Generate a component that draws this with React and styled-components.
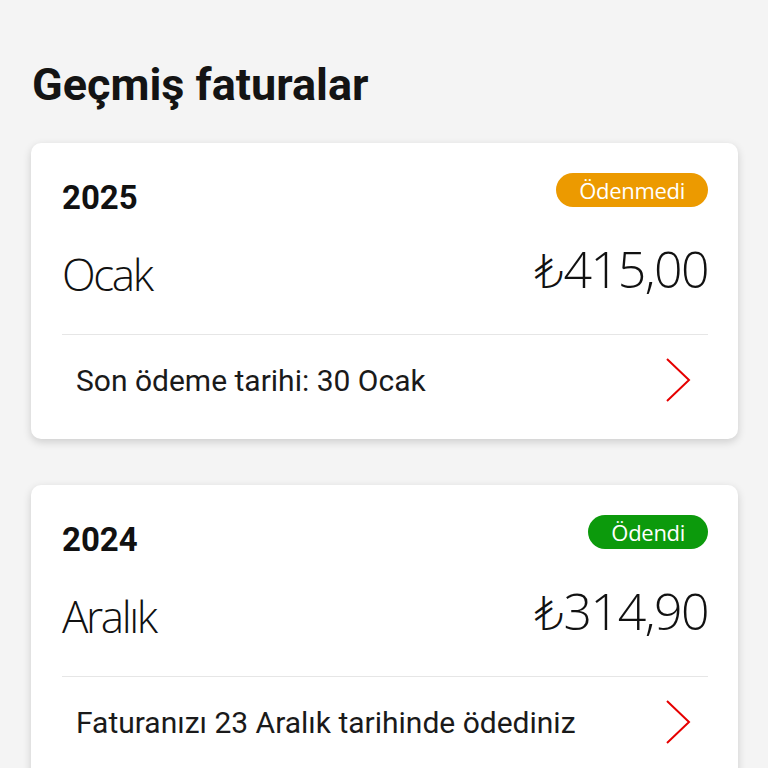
import React from "react"
import styled, { createGlobalStyle } from "styled-components"

const GlobalStyle = createGlobalStyle`
  html, body {
    margin: 0;
    padding: 0;
    background: #f4f4f4;
  }
  body {
    font-family: Roboto, "Liberation Sans", sans-serif;
    color: #111;
  }
`

const Page = styled.div`
  padding: 55px 30px 40px 31px;
  display: flex;
  flex-direction: column;
`

const Title = styled.h1`
  margin: 0 0 28px 1px;
  font-family: Roboto, sans-serif;
  font-weight: 700;
  font-size: 45px;
  line-height: 60px;
  color: #141414;
`

const CardList = styled.div`
  display: flex;
  flex-direction: column;
  gap: 46px;
`

const Card = styled.div`
  background: #fff;
  border-radius: 10px;
  box-shadow: 0 3px 8px rgba(0, 0, 0, 0.16);
  padding: 30px 30px 0 31px;
`

const HeaderRow = styled.div`
  display: flex;
  justify-content: space-between;
  align-items: flex-start;
  height: 40px;
`

const Year = styled.span`
  font-family: Roboto, sans-serif;
  font-weight: 700;
  font-size: 33px;
  line-height: 48px;
  margin-top: 1px;
`

const Badge = styled.span`
  display: inline-flex;
  align-items: center;
  justify-content: center;
  height: 34px;
  padding: 0 23px;
  border-radius: 17px;
  background: ${p => p.$color};
  color: #fff;
  font-family: "Open Sans", sans-serif;
  font-weight: 400;
  font-size: 22px;
  letter-spacing: -0.3px;
`

const AmountRow = styled.div`
  display: flex;
  justify-content: space-between;
  align-items: flex-end;
  height: 122px;
  padding-bottom: 44px;
  box-sizing: border-box;
  border-bottom: 1px solid #e6e6e6;
`

const Month = styled.span`
  font-family: "Open Sans", sans-serif;
  font-weight: 300;
  font-size: 44px;
  line-height: 44px;
  letter-spacing: -2.4px;
  margin-bottom: -6px;
`

const Amount = styled.span`
  font-family: "Open Sans", sans-serif;
  font-weight: 300;
  font-size: 50px;
  line-height: 50px;
  letter-spacing: -1.5px;
  margin-bottom: -4px;
`

// lira sign comes from a fallback face, keep it as thin as the digits
const Currency = styled.span`
  font-family: "DejaVu Sans", "Noto Sans", sans-serif;
  font-weight: 200;
  font-size: 46px;
  line-height: 0;
  letter-spacing: 0;
`

const Footer = styled.div`
  display: flex;
  justify-content: space-between;
  align-items: center;
  height: 104px;
  padding: 0 17px 14px 14px;
  box-sizing: border-box;
`

const FooterText = styled.span`
  font-family: Roboto, sans-serif;
  font-size: 30px;
  color: #1a1a1a;
`

const Chevron = () => (
  <svg width="26" height="46" viewBox="0 0 26 46" fill="none">
    <path d="M2 2 L24 23 L2 44" stroke="#e60000" strokeWidth="2" />
  </svg>
)

const bills = [
  {
    year: "2025",
    month: "Ocak",
    amount: "415,00",
    status: "Ödenmedi",
    color: "#ec9a00",
    note: "Son ödeme tarihi: 30 Ocak",
  },
  {
    year: "2024",
    month: "Aralık",
    amount: "314,90",
    status: "Ödendi",
    color: "#0c9a0c",
    note: "Faturanızı 23 Aralık tarihinde ödediniz",
  },
]

const BillCard = ({ bill }) => (
  <Card>
    <HeaderRow>
      <Year>{bill.year}</Year>
      <Badge $color={bill.color}>{bill.status}</Badge>
    </HeaderRow>
    <AmountRow>
      <Month>{bill.month}</Month>
      <Amount>
        <Currency>₺</Currency>
        {bill.amount}
      </Amount>
    </AmountRow>
    <Footer>
      <FooterText>{bill.note}</FooterText>
      <Chevron />
    </Footer>
  </Card>
)

const App = () => (
  <>
    <GlobalStyle />
    <Page>
      <Title>Geçmiş faturalar</Title>
      <CardList>
        {bills.map(b => (
          <BillCard key={b.year} bill={b} />
        ))}
      </CardList>
    </Page>
  </>
)

export default App
